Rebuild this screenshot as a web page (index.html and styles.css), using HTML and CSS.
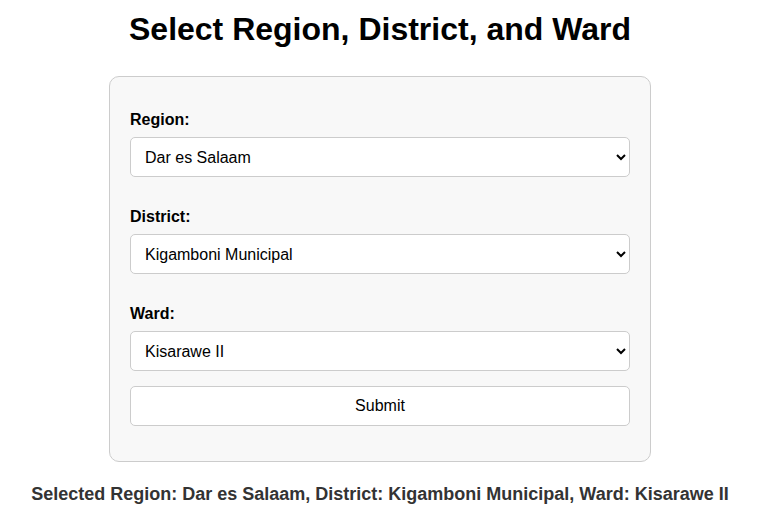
FILE: index.html
```html
<!DOCTYPE html>
<html lang="en">
<head>
<meta charset="utf-8">
<title>Select Region, District, and Ward</title>
<link rel="stylesheet" href="styles.css">
</head>
<body>
  <h1 class="title">Select Region, District, and Ward</h1>
  <form class="card">
    <label class="field-label" for="region">Region:</label>
    <select class="field-select" id="region">
      <option>Dar es Salaam</option>
    </select>
    <label class="field-label" for="district">District:</label>
    <select class="field-select" id="district">
      <option>Kigamboni Municipal</option>
    </select>
    <label class="field-label" for="ward">Ward:</label>
    <select class="field-select" id="ward">
      <option>Kisarawe II</option>
    </select>
    <button class="submit" type="button">Submit</button>
  </form>
  <p class="result">Selected Region: Dar es Salaam, District: Kigamboni Municipal, Ward: Kisarawe II</p>
</body>
</html>
```
FILE: styles.css
```css
html, body {
  background: #ffffff;
}
body {
  margin: 0 3px 0 0;
  font-family: "Liberation Sans", Arial, sans-serif;
  color: #000;
  display: flex;
  flex-direction: column;
  align-items: center;
}
.title {
  margin: 11px 0 28px;
  font-size: 32px;
  line-height: 37px;
  font-weight: bold;
  text-align: center;
}
.card {
  box-sizing: border-box;
  width: 542px;
  display: flex;
  flex-direction: column;
  padding: 34px 20px 20px;
  background: #f8f8f8;
  border: 1px solid #cccccc;
  border-radius: 10px;
}
.field-label {
  display: block;
  font-size: 16px;
  line-height: 18px;
  font-weight: bold;
  margin-bottom: 8px;
}
.field-select {
  box-sizing: border-box;
  width: 500px;
  height: 40px;
  padding: 0 10px;
  margin: 0 0 31px;
  font-family: "Liberation Sans", Arial, sans-serif;
  font-size: 16px;
  color: #000;
  background-color: #ffffff;
  border: 1px solid #cccccc;
  border-radius: 5px;
}
.field-select:last-of-type {
  margin-bottom: 15px;
}
.submit {
  box-sizing: border-box;
  width: 500px;
  height: 40px;
  margin-bottom: 15px;
  font-family: "Liberation Sans", Arial, sans-serif;
  font-size: 16px;
  color: #000;
  background: #ffffff;
  border: 1px solid #cccccc;
  border-radius: 5px;
}
.result {
  margin: 22px 0 0;
  font-size: 18px;
  line-height: 21px;
  font-weight: bold;
  color: #333333;
  text-align: center;
}
```
